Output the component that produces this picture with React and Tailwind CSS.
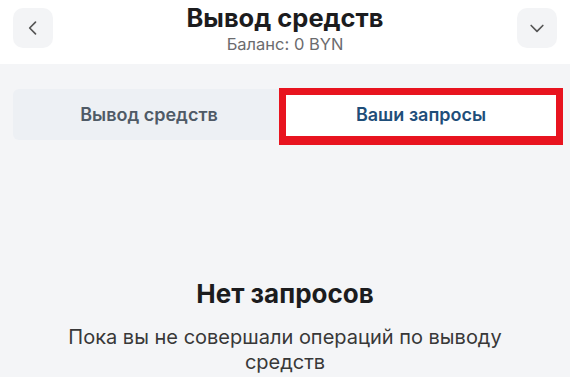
import React from "react";

export default function App() {
  return (
    <div className="w-[570px] h-[377px] overflow-hidden bg-[#f4f5f7] font-['Inter',sans-serif]">
      <header className="h-[64px] bg-white flex items-start justify-between px-[13px] pt-[8px]">
        <button className="w-[40px] h-[40px] rounded-[10px] bg-[#f3f4f6] flex items-center justify-center">
          <svg width="20" height="20" viewBox="0 0 24 24" fill="none" stroke="#555" strokeWidth="2" strokeLinecap="round" strokeLinejoin="round">
            <path d="M15 5l-7 7 7 7" />
          </svg>
        </button>
        <div className="flex flex-col items-center mt-[-6px]">
          <h1 className="text-[25.5px] leading-[31px] font-bold text-[#1c1c1e]">Вывод средств</h1>
          <p className="text-[16.5px] leading-[20px] mt-[1px] text-[#6b6b6e]">Баланс: 0 BYN</p>
        </div>
        <button className="w-[40px] h-[40px] rounded-[10px] bg-[#f3f4f6] flex items-center justify-center">
          <svg width="20" height="20" viewBox="0 0 24 24" fill="none" stroke="#555" strokeWidth="2" strokeLinecap="round" strokeLinejoin="round">
            <path d="M5 9l7 7 7-7" />
          </svg>
        </button>
      </header>

      <div className="px-[13px] pt-[25px]">
        <div className="relative flex h-[51px] rounded-[6px] bg-[#edf0f4]">
          <div className="flex-1 flex items-center justify-center text-[18px] font-semibold text-[#4f5a66]">
            Вывод средств
          </div>
          <div className="flex-1 flex items-center justify-center bg-white rounded-[4px] text-[18px] font-semibold text-[#1f4e79]">
            Ваши запросы
          </div>
          <div className="absolute left-[266px] top-[-1px] w-[284px] h-[57px] border-[7px] border-[#e8141f] border-b-[9px]" />
        </div>
      </div>

      <div className="flex flex-col items-center mt-[138px] px-[30px]">
        <h2 className="text-[26px] leading-[32px] font-bold text-[#1c1c1e]">Нет запросов</h2>
        <p className="mt-[15px] text-[20px] leading-[25px] text-[#383838] text-center w-[480px]">
          Пока вы не совершали операций по выводу средств
        </p>
      </div>
    </div>
  );
}
